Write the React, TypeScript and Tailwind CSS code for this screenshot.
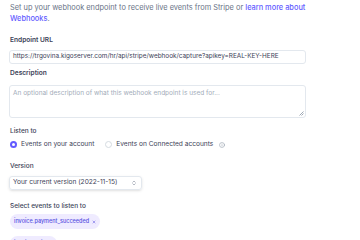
import { ChevronsUpDown, Info, X } from 'lucide-react';

export default function App() {
  return (
    <div className="w-[360px] h-[240px] overflow-hidden bg-white px-[10px] pt-[2px] text-[#3c4257]" style={{ fontFamily: 'Inter, "Open Sans", sans-serif' }}>
      <p className="text-[7.4px] leading-[11px] text-[#697386] whitespace-nowrap">
        Set up your webhook endpoint to receive live events from Stripe or{' '}
        <a className="text-[#635bff] font-medium">learn more about</a>
        <br />
        <a className="text-[#635bff] font-medium">Webhooks</a>.
      </p>

      {/* Endpoint URL */}
      <label className="block mt-[12px] text-[6.6px] leading-[9px] font-semibold">Endpoint URL</label>
      <div className="mt-[5px] -ml-[1px] w-[297px] h-[14px] rounded-[3px] border border-[#e3e8ee] flex items-center px-[3px] text-[6.4px] whitespace-nowrap">
        https://trgovina.kigoserver.com/hr/api/stripe/webhook/capture?apikey=REAL-KEY-HERE
      </div>

      {/* Description */}
      <label className="block mt-[5px] text-[6.6px] leading-[9px] font-semibold">Description</label>
      <div className="relative mt-[7px] -ml-[1px] w-[297px] h-[33px] rounded-[3px] border border-[#e3e8ee] px-[3px] pt-[3px] text-[6.5px] leading-[9px] text-[#a3acb9]">
        An optional description of what this webhook endpoint is used for...
        <svg className="absolute right-[1px] bottom-[1px]" width="5" height="5" viewBox="0 0 5 5">
          <path d="M4.5 0.5 L0.5 4.5 M4.5 2.5 L2.5 4.5" stroke="#8792a2" strokeWidth="0.8" />
        </svg>
      </div>

      {/* Listen to */}
      <label className="block mt-[9px] text-[6.5px] leading-[9px] font-medium">Listen to</label>
      <div className="mt-[4px] h-[10px] flex items-center gap-[11px] text-[6.6px]">
        <div className="flex items-center gap-[4px]">
          <span className="w-[7px] h-[7px] rounded-full bg-[#635bff] flex items-center justify-center">
            <span className="w-[3px] h-[3px] rounded-full bg-white" />
          </span>
          Events on your account
        </div>
        <div className="flex items-center gap-[4px]">
          <span className="w-[7px] h-[7px] rounded-full border border-[#d5dbe1]" />
          Events on Connected accounts
          <Info className="w-[6px] h-[6px] text-[#8792a2] ml-[2px]" />
        </div>
      </div>

      {/* Version */}
      <label className="block mt-[12px] text-[6.5px] leading-[9px] font-medium">Version</label>
      <div className="mt-[5px] -ml-[1px] w-[133px] h-[14px] rounded-[3px] border border-[#e3e8ee] shadow-sm flex items-center justify-between px-[3px] text-[6.6px] whitespace-nowrap">
        Your current version (2022-11-15)
        <ChevronsUpDown className="w-[6px] h-[6px] text-[#697386] mr-[1px]" />
      </div>

      {/* Events */}
      <label className="block mt-[12px] text-[6.5px] leading-[9px] font-medium">Select events to listen to</label>
      <div className="mt-[3px] flex flex-col items-start gap-[7px]">
        <span className="h-[15px] rounded-full bg-[#efebff] px-[4px] flex items-center gap-[3px] text-[5.5px] font-medium text-[#5851df]">
          invoice.payment_succeeded
          <X className="w-[4px] h-[4px]" strokeWidth={3} />
        </span>
        <span className="h-[15px] rounded-full bg-[#efebff] px-[4px] flex items-center gap-[3px] text-[5.5px] font-medium text-[#5851df]">
          invoice.paid
          <X className="w-[4px] h-[4px]" strokeWidth={3} />
        </span>
      </div>
    </div>
  );
}
